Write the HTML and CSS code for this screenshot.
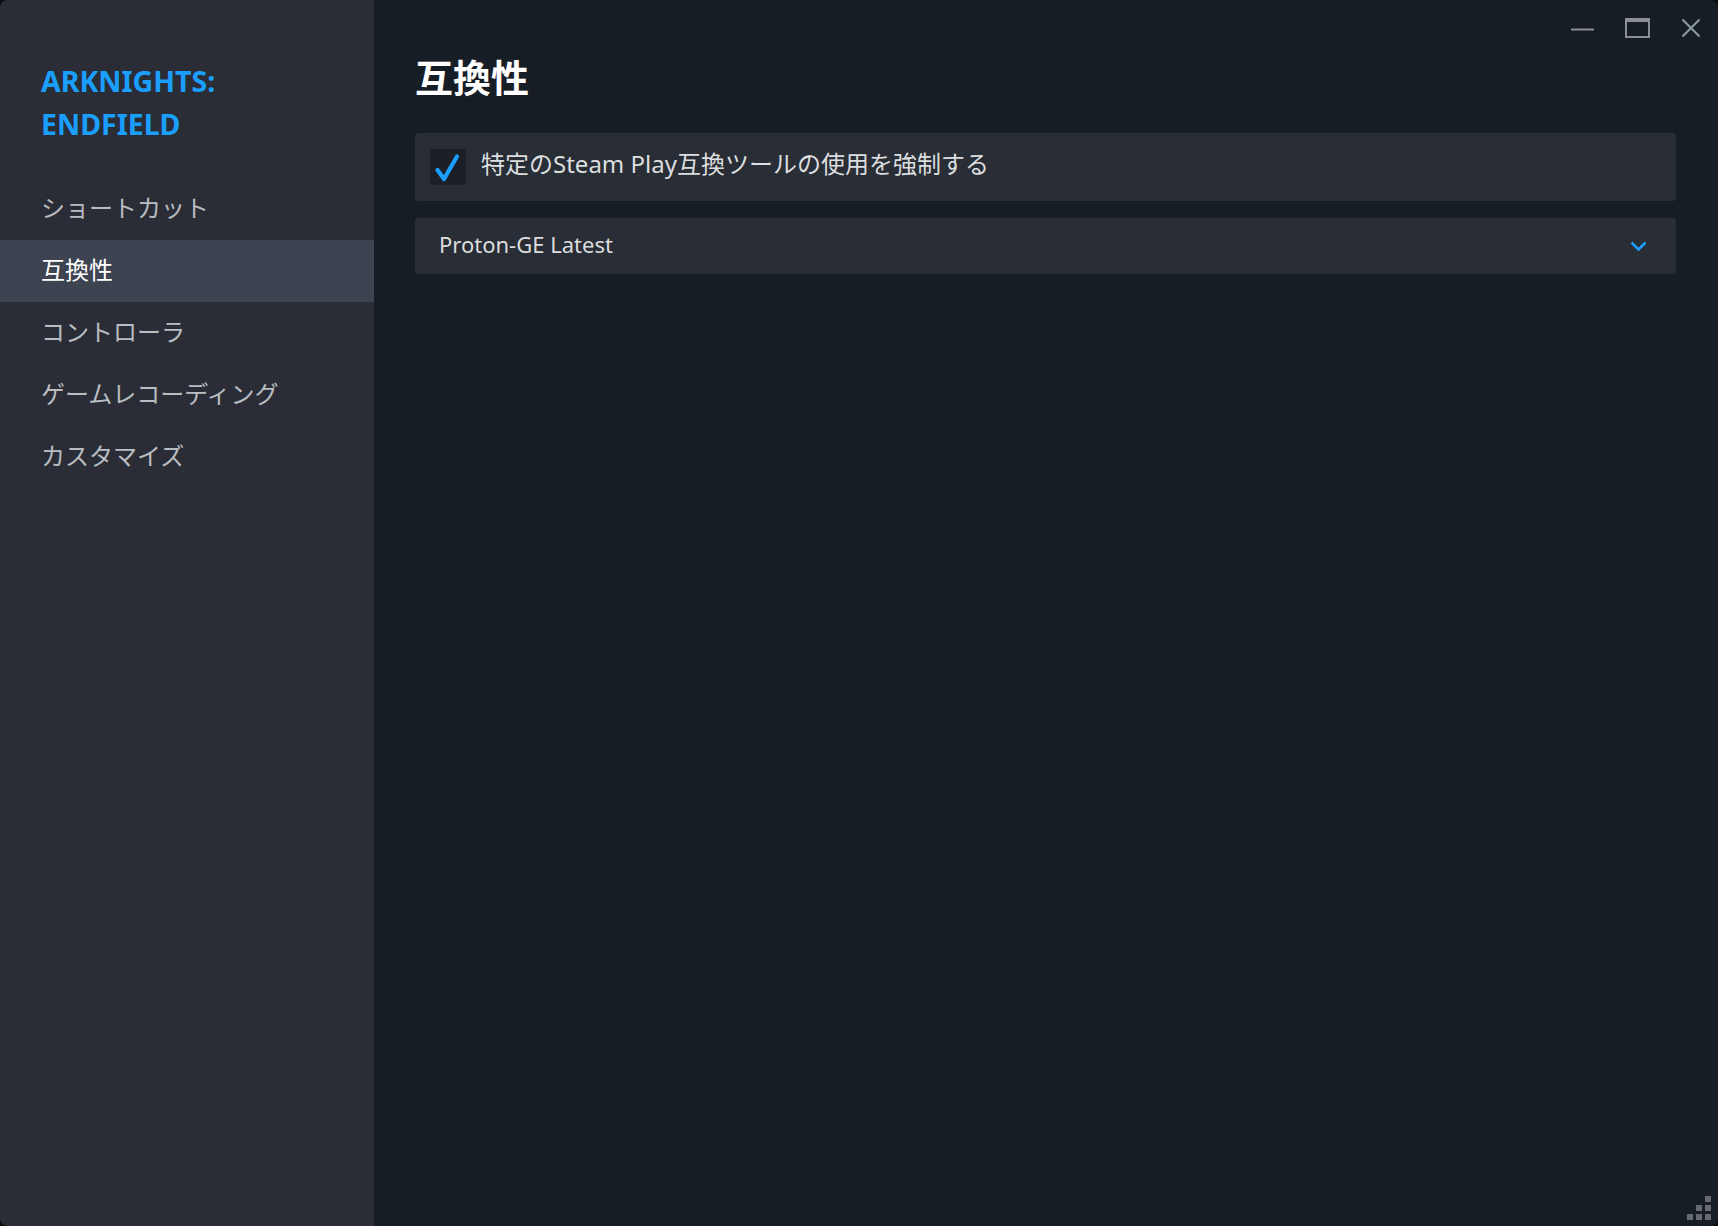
FILE: index.html
```html
<!DOCTYPE html>
<html lang="ja">
<head>
	<meta charset="utf-8">
	<title>互換性</title>
	<link rel="stylesheet" href="styles.css">
</head>
<body>
	<div class="window">
		<div class="sidebar">
			<div class="game-title">ARKNIGHTS:<br>ENDFIELD</div>
			<div class="nav">
				<div class="nav-item">ショートカット</div>
				<div class="nav-item active">互換性</div>
				<div class="nav-item">コントローラ</div>
				<div class="nav-item">ゲームレコーディング</div>
				<div class="nav-item">カスタマイズ</div>
			</div>
		</div>

		<div class="main">
			<div class="titlebar">
				<svg class="winbtn" width="23" height="20" viewBox="0 0 23 20">
					<rect x="0" y="10.5" width="23" height="2" fill="#8b8e92"/>
				</svg>
				<svg class="winbtn" width="25" height="20" viewBox="0 0 25 20">
					<rect x="1" y="1" width="23" height="18" fill="none" stroke="#8b8e92" stroke-width="2"/>
					<rect x="0" y="0" width="25" height="4" fill="#8b8e92"/>
				</svg>
				<svg class="winbtn" width="20" height="20" viewBox="0 0 20 20">
					<path d="M1.5 1.5 L18.5 18.5 M18.5 1.5 L1.5 18.5" stroke="#8a979d" stroke-width="2.2"/>
				</svg>
			</div>

			<div class="content">
				<h1 class="page-title">互換性</h1>

				<div class="setting-row">
					<div class="checkbox">
						<svg width="36" height="36" viewBox="0 0 36 36">
							<path d="M7.5 21 L14 30 L27 7.5" fill="none" stroke="#1a9fff" stroke-width="4.2" stroke-linecap="round" stroke-linejoin="round"/>
						</svg>
					</div>
					<span class="setting-label">特定のSteam Play互換ツールの使用を強制する</span>
				</div>

				<div class="dropdown">
					<span class="dropdown-value">Proton-GE Latest</span>
					<svg width="17" height="11" viewBox="0 0 17 11">
						<polyline points="1.5,1.5 8.5,8.5 15.5,1.5" fill="none" stroke="#1a9fff" stroke-width="2.5"/>
					</svg>
				</div>
			</div>

			<div class="grip">
				<span></span><span></span><span></span>
				<span></span><span></span><span></span>
				<span></span><span></span><span></span>
			</div>
		</div>
	</div>
</body>
</html>
```

FILE: styles.css
```css
*{
	box-sizing:border-box;
}

html,body{
	margin:0;
	padding:0;
	background:#0c0d10;
}

body{
	font-family:"Noto Sans","Noto Sans CJK JP",sans-serif;
}

.window{
	display:flex;
	width:1718px;
	height:1226px;
	border-radius:8px;
	overflow:hidden;
}

/* left column */
.sidebar{
	width:374px;
	flex-shrink:0;
	background-color:#2a2d36;
	padding-top:60px;
}

.game-title{
	padding-left:41px;
	font-size:28.5px;
	line-height:43px;
	font-weight:bold;
	color:#1a9fff;
	margin-bottom:32px;
}

.nav-item{
	height:62px;
	display:flex;
	align-items:center;
	padding-left:41px;
	padding-bottom:6px;
	font-size:24px;
	color:#b9bdc1;
}

.nav-item.active{
	background-color:#3d4350;
	color:#ffffff;
}

/* right column */
.main{
	flex:1;
	position:relative;
	background-color:#171d25;
}

.titlebar{
	height:55px;
	display:flex;
	justify-content:flex-end;
	align-items:center;
	gap:31px;
	padding-right:17px;
}

.winbtn{
	display:block;
}

.content{
	padding:0 42px 0 41px;
}

.page-title{
	margin:1px 0 34px 0;
	font-size:38px;
	line-height:43px;
	font-weight:bold;
	color:#ffffff;
}

.setting-row{
	height:68px;
	display:flex;
	align-items:center;
	gap:15px;
	padding:0 15px;
	background-color:#292d36;
	border-radius:4px;
	margin-bottom:17px;
}

.checkbox{
	width:36px;
	height:36px;
	border-radius:3px;
	background-color:#1c1f26;
}

.checkbox svg{
	display:block;
}

.setting-label{
	font-size:24px;
	color:#dcdedf;
	padding-bottom:9px;
}

.dropdown{
	height:56px;
	display:flex;
	align-items:center;
	justify-content:space-between;
	padding:0 29px 0 24px;
	background-color:#292d36;
	border-radius:4px;
}

.dropdown-value{
	font-size:22px;
	color:#dcdedf;
	padding-bottom:4px;
}

.dropdown svg{
	display:block;
}

/* resize handle in the corner */
.grip{
	position:absolute;
	right:7px;
	bottom:6px;
	display:grid;
	grid-template-columns:repeat(3,6px);
	gap:3px;
}

.grip span{
	width:6px;
	height:6px;
	background-color:#676a72;
}

.grip span:nth-child(1),
.grip span:nth-child(2),
.grip span:nth-child(4){
	visibility:hidden;
}
```
